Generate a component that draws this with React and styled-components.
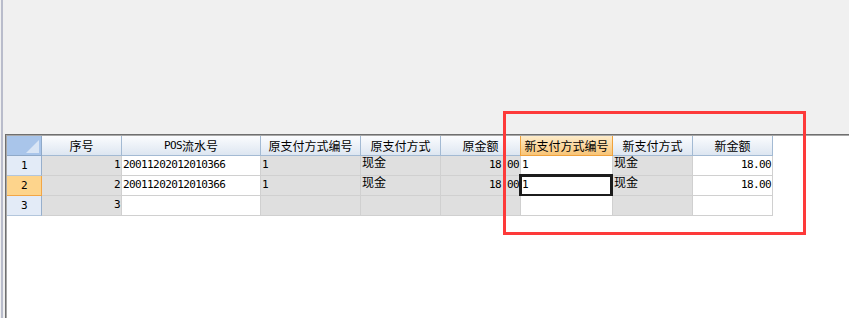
import React from "react";
import styled, { createGlobalStyle, css } from "styled-components";

const GlobalStyle = createGlobalStyle`
  html, body {
    margin: 0;
    padding: 0;
    background: #f0f0f0;
    overflow: hidden;
  }
  #root {
    height: 318px;
  }
`;

const columns = [
  { key: "seq", title: "序号", width: 80, align: "right", readOnly: true },
  { key: "pos", title: "POS流水号", width: 139, align: "left" },
  { key: "oldCode", title: "原支付方式编号", width: 100, align: "left", readOnly: true },
  { key: "oldName", title: "原支付方式", width: 80, align: "left", readOnly: true },
  { key: "oldAmt", title: "原金额", width: 80, align: "right", readOnly: true },
  { key: "newCode", title: "新支付方式编号", width: 92, align: "left" },
  { key: "newName", title: "新支付方式", width: 80, align: "left", readOnly: true },
  { key: "newAmt", title: "新金额", width: 80, align: "right" },
];

const rows = [
  { seq: "1", pos: "20011202012010366", oldCode: "1", oldName: "现金", oldAmt: "18.00", newCode: "1", newName: "现金", newAmt: "18.00" },
  { seq: "2", pos: "20011202012010366", oldCode: "1", oldName: "现金", oldAmt: "18.00", newCode: "1", newName: "现金", newAmt: "18.00" },
  { seq: "3", pos: "", oldCode: "", oldName: "", oldAmt: "", newCode: "", newName: "", newAmt: "" },
];

const activeRow = 1;
const activeCol = "newCode";

const Window = styled.div`
  position: relative;
  height: 318px;
  display: flex;
  flex-direction: column;
  border-left: 2px solid #b9bccb;
  margin-left: 1px;
  font-family: "Liberation Mono", "Noto Sans CJK SC", monospace;
  font-size: 12px;
  color: #000;
`;

const TopArea = styled.div`
  height: 134px;
  flex-shrink: 0;
  background: #f0f0f0;
`;

const GridPanel = styled.div`
  flex: 1;
  margin-left: 2px;
  background: #fff;
  border-top: 1px solid #6f6f6f;
  border-left: 1px solid #6f6f6f;
  box-shadow: inset 1px 1px 0 #a8a8a8;
  padding: 1px 0 0 1px;
`;

const Grid = styled.div`
  display: grid;
  grid-template-columns: 35px ${({ $cols }) => $cols};
  grid-auto-rows: 20px;
  width: max-content;
`;

const Corner = styled.div`
  position: relative;
  background: #a9c5ea;
  border-right: 1px solid #8fa9c8;
  border-bottom: 1px solid #8fa9c8;
  overflow: hidden;

  &::after {
    content: "";
    position: absolute;
    right: 2px;
    bottom: 2px;
    width: 0;
    height: 0;
    border-left: 13px solid transparent;
    border-bottom: 13px solid #d9e5f5;
  }
`;

const HeaderCell = styled.div`
  display: flex;
  align-items: center;
  justify-content: center;
  white-space: nowrap;
  overflow: hidden;
  background: linear-gradient(#fbfcfe, #dde6f1);
  border-right: 1px solid #a3bad3;
  border-bottom: 1px solid #a3bad3;

  ${({ $active }) =>
    $active &&
    css`
      background: linear-gradient(#fdeccb, #f8c476);
      border-right-color: #f0a23c;
      border-bottom-color: #f0a23c;
      border-left: 1px solid #f0a23c;
      margin-left: -1px;
    `}
`;

const RowHeader = styled.div`
  display: flex;
  align-items: center;
  justify-content: center;
  background: #e3ebf7;
  border-right: 1px solid #97afcc;
  border-bottom: 1px solid #b3c6dc;

  ${({ $active }) =>
    $active &&
    css`
      background: #fdd48c;
      border-right-color: #f2a646;
      border-bottom-color: #f2a646;
    `}
`;

const Cell = styled.div`
  position: relative;
  padding: 2px 1px 0 1px;
  white-space: nowrap;
  overflow: visible;
  text-align: ${({ $align }) => $align};
  background: ${({ $readOnly }) => ($readOnly ? "#dfdfdf" : "#fff")};
  border-right: 1px solid #d0d0d0;
  border-bottom: 1px solid #d0d0d0;
  line-height: 13px;
`;

const Num = styled.span`
  font-family: "DejaVu Sans Mono", "Liberation Mono", monospace;
  font-size: 11px;
  letter-spacing: -0.6px;
`;

const ActiveFrame = styled.div`
  position: absolute;
  left: -2px;
  top: -2px;
  right: -1px;
  bottom: -2px;
  border: 3px solid #1c1c1c;
  pointer-events: none;
`;

const Highlight = styled.div`
  position: absolute;
  left: 500px;
  top: 111px;
  width: 297px;
  height: 118px;
  border: 3px solid #fd3a3a;
  pointer-events: none;
`;

const renderValue = (v) =>
  /^[\x00-\x7f]+$/.test(v) ? <Num>{v}</Num> : v;

const renderTitle = (t) =>
  t.startsWith("POS") ? (
    <>
      <Num>POS</Num>
      {t.slice(3)}
    </>
  ) : (
    t
  );

export default function App() {
  const template = columns.map((c) => `${c.width}px`).join(" ");

  return (
    <>
      <GlobalStyle />
      <Window>
        <TopArea />
        <GridPanel>
          <Grid $cols={template}>
            <Corner />
            {columns.map((c) => (
              <HeaderCell key={c.key} $active={c.key === activeCol}>
                {renderTitle(c.title)}
              </HeaderCell>
            ))}
            {rows.map((r, i) => (
              <React.Fragment key={i}>
                <RowHeader $active={i === activeRow}>
                  <Num>{i + 1}</Num>
                </RowHeader>
                {columns.map((c) => (
                  <Cell key={c.key} $align={c.align} $readOnly={c.readOnly}>
                    {r[c.key] && renderValue(r[c.key])}
                    {i === activeRow && c.key === activeCol && <ActiveFrame />}
                  </Cell>
                ))}
              </React.Fragment>
            ))}
          </Grid>
        </GridPanel>
        <Highlight />
      </Window>
    </>
  );
}
